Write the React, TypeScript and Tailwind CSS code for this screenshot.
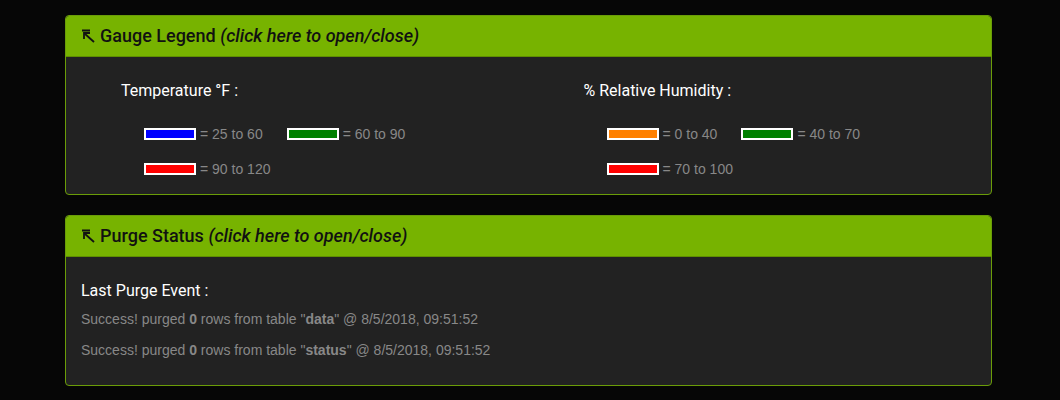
import React from "react";

const CornerArrow = () => (
    <svg width="14" height="14" viewBox="0 0 14 14" className="inline-block mr-[5px] -mt-[3px] align-middle" fill="none" stroke="#111" strokeWidth="1.8">
        <path d="M1 1.5 H9" />
        <path d="M13 13 L3.5 4.5" />
        <path d="M3 10 V4 H9" />
    </svg>
);

const PanelHeader = ({ title }: { title: string }) => (
    <div className="bg-[#77b300] px-[15px] py-[10px] rounded-t-[3px] border-b border-[#5f8f00]">
        <h3 className="text-[18px] leading-[20px] font-medium text-[#111] font-['Roboto',sans-serif]">
            <CornerArrow />
            {title} <i>(click here to open/close)</i>
        </h3>
    </div>
);

const Swatch = ({ color, label }: { color: string; label: string }) => (
    <span className="inline-flex items-center mr-[24px]">
        <span className="inline-block w-[52px] h-[12px] border-2 border-white" style={{ background: color }} />
        <span className="ml-[4px]">{label}</span>
    </span>
);

type Item = { color: string; label: string };

const LegendColumn = ({ title, rows, pad }: { title: string; rows: Item[][]; pad: string }) => (
    <div className={`w-1/2 ${pad}`}>
        <h4 className="mt-[10px] text-[16px] leading-[18px] font-normal text-white font-['Roboto',sans-serif]">{title}</h4>
        <div className="pl-[23px]">
            {rows.map((row, i) => (
                <div key={i} className={`flex h-[20px] items-center ${i === 0 ? "mt-[24px]" : "mt-[15px]"}`}>
                    {row.map(item => <Swatch key={item.label} color={item.color} label={item.label} />)}
                </div>
            ))}
        </div>
    </div>
);

export default function App() {
    const temp: Item[][] = [
        [{ color: "#0000ff", label: "= 25 to 60" }, { color: "#008000", label: "= 60 to 90" }],
        [{ color: "#ff0000", label: "= 90 to 120" }],
    ];
    const hum: Item[][] = [
        [{ color: "#ff8000", label: "= 0 to 40" }, { color: "#008000", label: "= 40 to 70" }],
        [{ color: "#ff0000", label: "= 70 to 100" }],
    ];
    return (
        <div className="min-h-[400px] bg-[#060606] pt-[15px] font-['Liberation_Sans',Arial,sans-serif] text-[14px] text-[#888]">
            <div className="ml-[65px] w-[927px] mb-[20px] border border-[#6a9c08] rounded-[4px] bg-[#222] overflow-hidden">
                <PanelHeader title="Gauge Legend" />
                <div className="flex px-[15px] pt-[15px] pb-[15px]">
                    <LegendColumn title="Temperature °F :" rows={temp} pad="pl-[40px]" />
                    <LegendColumn title="% Relative Humidity :" rows={hum} pad="pl-[55px]" />
                </div>
            </div>
            <div className="ml-[65px] w-[927px] border border-[#6a9c08] rounded-[4px] bg-[#222] overflow-hidden">
                <PanelHeader title="Purge Status" />
                <div className="p-[15px]">
                    <h4 className="mt-[10px] mb-[9px] text-[16px] leading-[18px] font-normal text-white font-['Roboto',sans-serif]">Last Purge Event :</h4>
                    <p className="leading-[20px] mb-[11px]">Success! purged <b>0</b> rows from table "<b>data</b>" @ 8/5/2018, 09:51:52</p>
                    <p className="leading-[20px] mb-[10px]">Success! purged <b>0</b> rows from table "<b>status</b>" @ 8/5/2018, 09:51:52</p>
                </div>
            </div>
        </div>
    );
}
